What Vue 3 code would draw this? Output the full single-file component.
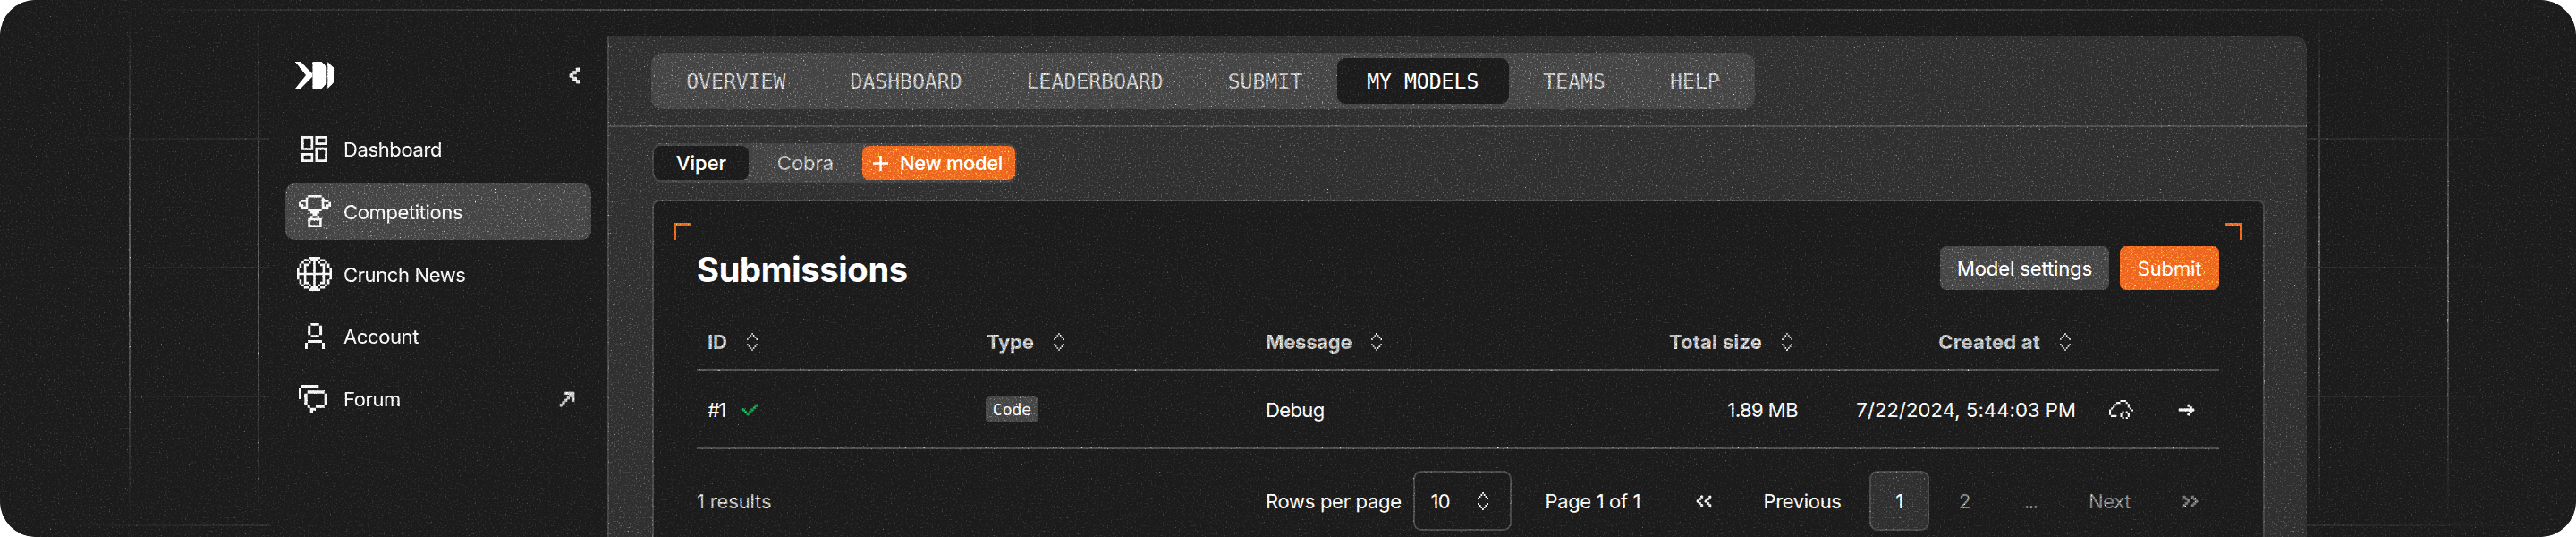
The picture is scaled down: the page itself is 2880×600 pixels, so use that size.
<script setup>
import { h } from 'vue'

const bitmaps = {
  globe: [
    '.....#####.....', '...##.###.##...', '..#..#.#.#..#..', '.#.##..#..##.#.', '.#.#...#...#.#.',
    '#..#...#...#..#', '#..#...#...#..#', '###############', '#..#...#...#..#', '#..#...#...#..#',
    '.#.#...#...#.#.', '.#.##..#..##.#.', '..#..#.#.#..#..', '...##.###.##...', '.....#####.....',
  ],
  trophy: [
    '....######....', '...#......#...', '.###......###.', '#..#......#..#', '##.#......#.##', '.###......###.',
    '....######....', '.....####.....', '......##......', '.....#..#.....', '....######....', '....#....#....',
    '....#....#....', '....######....',
  ],
  cloud: [
    '......###....', '....##...#...', '...#......#..', '..#.......#..', '.#.........#.', '#...........#',
    '#......#.#...', '#.....#...#..', '.###..#...#..', '.......#.#...',
  ],
  right: ['....#..', '.....#.', '#######', '.....#.', '....#..'],
  sort: ['...#...', '..#.#..', '.#...#.', '#.....#', '.......', '.......', '#.....#', '.#...#.', '..#.#..', '...#...'],
  first: ['..#...#', '.#...#.', '#...#..', '.#...#.', '..#...#'],
  last: ['#...#..', '.#...#.', '..#...#', '.#...#.', '#...#..'],
  collapse: ['..#', '.#.', '#..', '.#.', '..#'],
  external: ['..####', '....##', '...#.#', '..#..#', '.#....', '#.....'],
  check: ['......#', '.....#.', '#...#..', '.#.#...', '..#....'],
}

const shapes = {
  dashboard: { box: '0 0 88 88', d: 'M0 0h40v48h-40zM8 8v32h24v-32zM47 0h41v30h-41zM55 8v14h25v-14zM0 58h40v30h-40zM8 66v14h24v-14zM47 39h41v49h-41zM55 47v33h25v-33z' },
  account: { box: '0 0 67 87', d: 'M20 0h28v8h-28zM10 8h9v32h-9zM49 8h9v32h-9zM20 40h28v8h-28zM10 57h48v9h-48zM0 66h9v21h-9zM58 66h9v21h-9z' },
  forum: { box: '0 0 96 96', d: 'M9 0h58v10h-58zM0 10h9v38h-9zM29 19h57v10h-57zM19 29h10v39h-10zM86 29h10v39h-10zM29 68h9v9h-9zM57 68h29v9h-29zM38 77h19v9h-10v10h-9z' },
  logo: { box: '0 0 128 90', d: 'M0 0H18L57 40V50L18 90H0L36 45ZM58 0H88L105 18V72L88 90H58ZM108 0L128 20V70L108 90Z' },
  plus: { box: '0 0 17 17', d: 'M7.3 0h2.4v7.3h7.3v2.4h-7.3v7.3h-2.4v-7.3h-7.3v-2.4h7.3z' },
}

for (const [name, rows] of Object.entries(bitmaps)) {
  let d = ''
  rows.forEach((row, y) => {
    for (const run of row.matchAll(/#+/g)) d += `M${run.index} ${y}h${run[0].length}v1h-${run[0].length}z`
  })
  shapes[name] = { box: `0 0 ${rows[0].length} ${rows.length}`, d }
}

const Icon = (props) =>
  h('svg', { viewBox: shapes[props.name].box, preserveAspectRatio: 'none', fill: 'currentColor' }, [
    h('path', { d: shapes[props.name].d, 'fill-rule': 'evenodd' }),
  ])
Icon.props = ['name']

const nav = [
  { label: 'Dashboard', icon: 'dashboard' },
  { label: 'Competitions', icon: 'trophy', active: true },
  { label: 'Crunch News', icon: 'globe' },
  { label: 'Account', icon: 'account' },
  { label: 'Forum', icon: 'forum', external: true },
]
const tabs = ['OVERVIEW', 'DASHBOARD', 'LEADERBOARD', 'SUBMIT', 'MY MODELS', 'TEAMS', 'HELP']
const columns = [
  { label: 'ID' }, { label: 'Type' }, { label: 'Message' },
  { label: 'Total size', end: true }, { label: 'Created at', end: true },
]
</script>

<template>
  <div class="frame">
    <div class="lines-v"></div>
    <div class="lines-h"></div>
    <div class="window">
      <aside class="sidebar">
        <div class="brand">
          <Icon name="logo" class="i-logo" />
          <Icon name="collapse" class="i-collapse" />
        </div>
        <nav class="nav">
          <a v-for="item in nav" :key="item.label" class="nav-item" :class="{ active: item.active }">
            <span class="nav-icon"><Icon :name="item.icon" :class="'i-' + item.icon" /></span>
            <span class="nav-label">{{ item.label }}</span>
            <Icon v-if="item.external" name="external" class="i-external" />
          </a>
        </nav>
      </aside>

      <main class="main">
        <header class="topbar">
          <div class="tabs">
            <span v-for="tab in tabs" :key="tab" class="tab" :class="{ current: tab === 'MY MODELS' }">{{ tab }}</span>
          </div>
        </header>
        <div class="models">
          <span class="model chosen">Viper</span>
          <span class="model">Cobra</span>
          <span class="new"><Icon name="plus" class="i-plus" /><span>New model</span></span>
        </div>

        <section class="card">
          <i class="corner left"></i>
          <i class="corner right"></i>
          <div class="card-head">
            <h1>Submissions</h1>
            <div class="actions">
              <button class="btn settings">Model settings</button>
              <button class="btn submit">Submit</button>
            </div>
          </div>
          <div class="row head">
            <div v-for="c in columns" :key="c.label" class="cell" :class="{ end: c.end }">
              <span>{{ c.label }}</span><Icon name="sort" class="i-sort" />
            </div>
          </div>
          <div class="row body">
            <div class="cell"><span class="number">#1</span><Icon name="check" class="i-check" /></div>
            <div class="cell"><span class="badge">Code</span></div>
            <div class="cell"><span class="debug">Debug</span></div>
            <div class="cell end size">1.89 MB</div>
            <div class="cell end date">7/22/2024, 5:44:03 PM</div>
            <div class="cell tools"><Icon name="cloud" class="i-cloud" /><Icon name="right" class="i-right" /></div>
          </div>
          <footer class="pager">
            <span class="results">1 results</span>
            <span class="per">Rows per page</span>
            <span class="select"><span>10</span><Icon name="sort" class="i-sort" /></span>
            <span class="pageof">Page 1 of 1</span>
            <Icon name="first" class="i-double" />
            <span class="prev">Previous</span>
            <span class="page">1</span>
            <span class="dim two">2</span>
            <span class="dim dots">...</span>
            <span class="dim next">Next</span>
            <Icon name="last" class="i-double dim" />
          </footer>
        </section>
      </main>
    </div>
    <svg class="grain" width="2880" height="600">
      <filter id="grain" x="0" y="0" width="100%" height="100%" color-interpolation-filters="sRGB">
        <feTurbulence type="fractalNoise" baseFrequency="0.55" numOctaves="2" seed="4" />
        <feColorMatrix values="2 0 0 0 -1.06  2 0 0 0 -1.06  2 0 0 0 -1.06  0 0 0 0 1" />
      </filter>
      <rect width="2880" height="600" filter="url(#grain)" />
    </svg>
  </div>
</template>

<style>
body { margin: 0; background: #fff; }
</style>

<style scoped>
* { box-sizing: border-box; }
.frame {
  position: relative; width: 2880px; height: 600px; overflow: hidden; border-radius: 40px;
  background: #1b1b1b; color: #f2f2f2; isolation: isolate;
  font: 400 22px/28px Inter, "Liberation Sans", sans-serif; white-space: nowrap;
}
.lines-v, .lines-h, .grain { position: absolute; inset: 0; }
.lines-v {
  left: 20px; right: 20px;
  background: repeating-linear-gradient(90deg, transparent 0 124px, #5c5c5c 124px 126px, transparent 126px 144px);
  -webkit-mask: linear-gradient(transparent 10px, #000 50%, transparent 585px);
  mask: linear-gradient(transparent 10px, #000 50%, transparent 585px);
}
.lines-h {
  background:
    linear-gradient(90deg, transparent 60px, #424242 700px, #424242 2180px, transparent 2830px) 0 10px / 100% 2px no-repeat,
    repeating-linear-gradient(#2c2c2c 0 2px, transparent 2px 144px) 0 154px no-repeat;
  -webkit-mask: linear-gradient(90deg, transparent 60px, #000 300px, #000 2580px, transparent 2830px);
  mask: linear-gradient(90deg, transparent 60px, #000 300px, #000 2580px, transparent 2830px);
}
.grain { mix-blend-mode: color-dodge; pointer-events: none; }
.window {
  position: relative; display: flex; width: 2278px; height: 560px; margin: 40px 0 0 301px;
  background: #1b1b1b; border-top-right-radius: 14px; overflow: hidden;
}
.sidebar { width: 378px; padding: 29px 18px 0; }
.brand { display: flex; justify-content: space-between; align-items: flex-start; height: 66px; padding: 0 13px 0 11px; }
.i-logo { width: 43px; height: 30px; color: #fff; }
.i-collapse { width: 11px; height: 17px; margin-top: 7px; color: #dcdcdc; }
.i-collapse, .i-external, .i-double, .i-check, .i-right { stroke: currentColor; stroke-width: 0.25; overflow: visible; }
.nav { display: flex; flex-direction: column; gap: 6.8px; }
.nav-item { display: flex; align-items: center; height: 63px; padding: 0 19px 0 13px; border-radius: 10px; }
.nav-item.active { background: #444; }
.nav-icon { display: flex; justify-content: center; width: 39px; margin-right: 13px; }
.nav-label { flex: 1; padding-top: 1px; letter-spacing: -0.38px; }
.i-dashboard { width: 29px; height: 29px; }
.i-trophy { width: 36px; height: 36px; }
.i-globe { width: 39px; height: 38px; }
.i-account { width: 22px; height: 29px; }
.i-forum { width: 32px; height: 32px; margin-right: 3px; }
.i-external { width: 16px; height: 16px; color: #c8c8c8; }

.main { flex: 1; background: #2f2f2f; border-left: 2px solid #454545; }
.topbar { height: 102px; padding: 19px 0 0 47px; border-bottom: 2px solid #4d4d4d; }
.tabs { display: inline-flex; gap: 5.7px; height: 63px; padding: 6px; border-radius: 13px; background: #444; }
.tab {
  display: flex; align-items: center; padding: 0 33.2px; border-radius: 9px; color: #b8b8b8;
  font: 400 23.1px/28px "DejaVu Sans Mono", monospace;
}
.tab.current { background: #1b1b1b; color: #fff; }
.models {
  display: inline-flex; height: 44px; margin: 18px 0 0 48px; padding: 3px 2px; border-radius: 11px;
  background: #424242; vertical-align: top;
}
.model { display: flex; align-items: center; justify-content: center; width: 106px; border-radius: 8px; color: #b8b8b8; }
.model:nth-child(2) { width: 127px; }
.model.chosen { background: #1b1b1b; color: #fff; font-weight: 500; }
.new {
  display: flex; align-items: center; gap: 13px; width: 171px; padding-left: 12px; border-radius: 8px;
  background: #ea6620; color: #fff; font-weight: 500; letter-spacing: -0.35px;
}
.i-plus { width: 17px; height: 17px; }

.card {
  position: relative; width: 1803px; height: 400px; margin: 19px 0 0 48px; padding: 0 49px 0 48px;
  border: 2px solid #484848; border-bottom: 0; border-radius: 8px 8px 0 0; background: #1b1b1b;
}
.corner { position: absolute; top: 24px; width: 19px; height: 19px; border-top: 3px solid #ea6620; }
.corner.left { left: 22px; border-left: 3px solid #ea6620; }
.corner.right { right: 23px; border-right: 3px solid #ea6620; }
.card-head { display: flex; justify-content: space-between; align-items: center; height: 49px; margin-top: 50px; }
h1 { margin: 2px 0 0; font-size: 38px; line-height: 48px; font-weight: 700; letter-spacing: -0.25px; color: #fff; }
.actions { display: flex; gap: 12px; }
.btn { height: 49px; padding: 0; border: 0; border-radius: 7px; font: inherit; letter-spacing: -0.12px; color: #fff; }
.settings { width: 189px; background: #444; }
.submit { width: 111px; background: #ea6620; }
.row { display: grid; grid-template-columns: 312px 312px 312px 307px 311px 147px; align-items: center; }
.row.head { height: 90px; padding-top: 28px; color: #b8b8b8; font-weight: 700; letter-spacing: -0.25px; border-bottom: 2px solid #505050; }
.row.body { height: 88px; padding-top: 1px; border-bottom: 2px solid #4c4c4c; }
.cell { display: flex; align-items: center; padding: 0 12px; }
.cell.end { justify-content: flex-end; }
.head .end { padding-right: 18px; letter-spacing: 0.2px; }
.i-sort { width: 12px; height: 20px; margin-left: 22px; color: #b8b8b8; }
.number { width: 18px; letter-spacing: -1.8px; }
.i-check { width: 17px; height: 12px; margin-left: 21px; color: #14a150; }
.badge {
  display: flex; align-items: center; justify-content: center; width: 59px; height: 29px; margin-left: -1px;
  border-radius: 5px; background: #444; font: 400 18px/22px "DejaVu Sans Mono", monospace;
}
.debug { letter-spacing: -0.6px; }
.size { letter-spacing: -0.55px; }
.date { letter-spacing: 0.1px; }
.tools { padding: 0 27px 0 25px; justify-content: space-between; }
.i-cloud { width: 27px; height: 21px; }
.i-right { width: 17px; height: 12px; }
.pager { display: flex; align-items: center; height: 67px; margin-top: 24px; letter-spacing: -0.35px; }
.results { width: 636px; color: #b8b8b8; letter-spacing: -0.15px; }
.per { width: 164.5px; letter-spacing: -0.3px; }
.select {
  display: flex; align-items: center; justify-content: space-between; width: 110px; height: 67px; padding: 0 24px 0 18px;
  border: 2px solid #484848; border-radius: 9px; letter-spacing: -0.8px;
}
.select .i-sort { margin: 0; color: #f0f0f0; }
.pageof { width: 168px; padding-left: 38px; }
.i-double { width: 16px; height: 12px; margin-left: 39px; }
.prev { width: 177.5px; padding-left: 59px; }
.page {
  display: flex; align-items: center; justify-content: center; width: 67px; height: 67px;
  border: 2px solid #484848; border-radius: 9px; background: #2f2f2f;
}
.dim { color: #808080; }
.two { width: 106px; padding-left: 33px; }
.dots { width: 72px; letter-spacing: -1.6px; }
.next { width: 49px; }
.dim.i-double { margin-left: 57px; }
</style>
